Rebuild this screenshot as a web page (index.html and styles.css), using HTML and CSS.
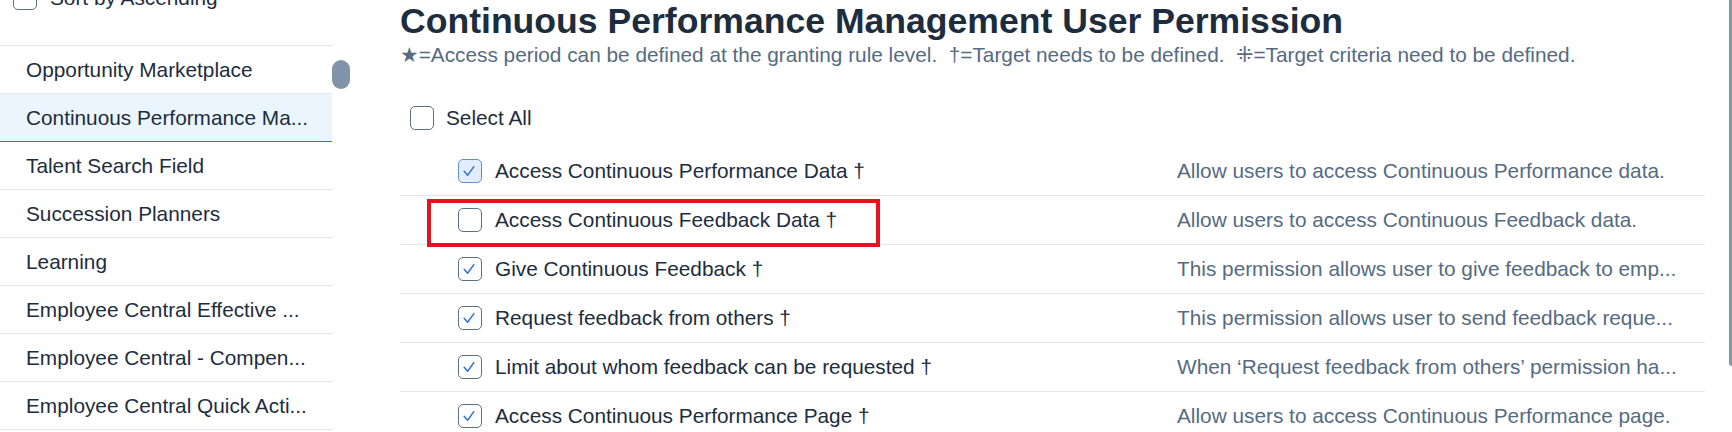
FILE: index.html
```html
<!DOCTYPE html>
<html lang="en">
<head>
<meta charset="utf-8">
<title>Continuous Performance Management User Permission</title>
<link rel="stylesheet" href="styles.css">
</head>
<body>
<aside class="side">
  <div class="side-panel">
    <label class="sort-row">
      <span class="cb"></span>
      <span class="sort-text">Sort by Ascending</span>
    </label>
    <ul class="cat-list">
      <li class="cat">Opportunity Marketplace</li>
      <li class="cat cat-selected">Continuous Performance Ma...</li>
      <li class="cat">Talent Search Field</li>
      <li class="cat">Succession Planners</li>
      <li class="cat">Learning</li>
      <li class="cat">Employee Central Effective ...</li>
      <li class="cat">Employee Central - Compen...</li>
      <li class="cat">Employee Central Quick Acti...</li>
    </ul>
  </div>
  <div class="side-track"><div class="side-thumb"></div></div>
</aside>

<main class="main">
  <h1 class="title">Continuous Performance Management User Permission</h1>
  <p class="legend">★=Access period can be defined at the granting rule level.&nbsp; †=Target needs to be defined.&nbsp; ⁜=Target criteria need to be defined.</p>

  <div class="select-all">
    <span class="cb"></span>
    <span class="select-text">Select All</span>
  </div>

  <div class="perm-list">
    <div class="perm">
      <div class="perm-name">
        <span class="cb cb-checked cb-focus"><svg viewBox="0 0 24 24"><polyline points="5.6,12.4 9.4,16.6 16.2,7.2"/></svg></span>
        <span class="perm-label">Access Continuous Performance Data †</span>
      </div>
      <div class="perm-desc">Allow users to access Continuous Performance data.</div>
    </div>
    <div class="perm perm-marked">
      <div class="perm-name">
        <span class="cb"></span>
        <span class="perm-label">Access Continuous Feedback Data †</span>
      </div>
      <div class="perm-desc">Allow users to access Continuous Feedback data.</div>
      <div class="mark-box"></div>
    </div>
    <div class="perm">
      <div class="perm-name">
        <span class="cb cb-checked"><svg viewBox="0 0 24 24"><polyline points="5.6,12.4 9.4,16.6 16.2,7.2"/></svg></span>
        <span class="perm-label">Give Continuous Feedback †</span>
      </div>
      <div class="perm-desc">This permission allows user to give feedback to emp...</div>
    </div>
    <div class="perm">
      <div class="perm-name">
        <span class="cb cb-checked"><svg viewBox="0 0 24 24"><polyline points="5.6,12.4 9.4,16.6 16.2,7.2"/></svg></span>
        <span class="perm-label">Request feedback from others †</span>
      </div>
      <div class="perm-desc">This permission allows user to send feedback reque...</div>
    </div>
    <div class="perm">
      <div class="perm-name">
        <span class="cb cb-checked"><svg viewBox="0 0 24 24"><polyline points="5.6,12.4 9.4,16.6 16.2,7.2"/></svg></span>
        <span class="perm-label">Limit about whom feedback can be requested †</span>
      </div>
      <div class="perm-desc">When ‘Request feedback from others’ permission ha...</div>
    </div>
    <div class="perm">
      <div class="perm-name">
        <span class="cb cb-checked"><svg viewBox="0 0 24 24"><polyline points="5.6,12.4 9.4,16.6 16.2,7.2"/></svg></span>
        <span class="perm-label">Access Continuous Performance Page †</span>
      </div>
      <div class="perm-desc">Allow users to access Continuous Performance page.</div>
    </div>
  </div>
</main>

<div class="page-track"><div class="page-thumb"></div></div>
</body>
</html>
```

FILE: styles.css
```css
html, body {
  margin: 0;
  padding: 0;
}

body {
  width: 1732px;
  height: 432px;
  overflow: hidden;
  display: flex;
  align-items: flex-start;
  background: #ffffff;
  color: #1d2d3e;
  font-family: "Liberation Sans", Arial, "DejaVu Sans", sans-serif;
  font-size: 20.8px;
}

/* ---------- left panel ---------- */
.side {
  width: 350px;
  flex: none;
  display: flex;
  align-items: flex-start;
}

.side-panel {
  width: 332px;
  flex: none;
}

.sort-row {
  display: flex;
  align-items: center;
  gap: 13px;
  height: 48px;
  margin-top: -26px;
  padding-left: 13px;
}

.cat-list {
  list-style: none;
  margin: 23px 0 0;
  padding: 0;
  border-top: 1px solid #e5e5e5;
}

.cat {
  height: 47px;
  line-height: 47px;
  padding-left: 26px;
  border-bottom: 1px solid #e5e5e5;
  white-space: nowrap;
  overflow: hidden;
}

.cat-selected {
  background: #ebf5fe;
  border-bottom-color: #3f6fc6;
}

.side-track {
  width: 18px;
  flex: none;
  padding-top: 60px;
}

.side-thumb {
  width: 18px;
  height: 29px;
  border-radius: 9px;
  background: #8193a8;
}

/* ---------- checkbox ---------- */
.cb {
  width: 24px;
  height: 24px;
  flex: none;
  box-sizing: border-box;
  border: 1px solid #5b6f85;
  border-radius: 5px;
  background: #ffffff;
  display: flex;
  align-items: center;
  justify-content: center;
}

.cb svg {
  width: 24px;
  height: 24px;
  fill: none;
  stroke: #2f6fd6;
  stroke-width: 1.6;
  stroke-linecap: round;
  stroke-linejoin: round;
}

.cb-focus {
  border-color: #5b8ee0;
  background: #e3eefc;
}

/* ---------- main ---------- */
.main {
  width: 1305px;
  flex: none;
  margin-left: 50px;
}

.title {
  margin: 0;
  padding-top: 1px;
  font-size: 35.6px;
  line-height: 40px;
  font-weight: 700;
  color: #1d2d3e;
  white-space: nowrap;
}

.legend {
  margin: 2px 0 0;
  font-size: 20.8px;
  line-height: 24px;
  color: #556b82;
  white-space: nowrap;
}

.select-all {
  display: flex;
  align-items: center;
  gap: 12px;
  height: 48px;
  margin-top: 27px;
  padding-left: 10px;
}

.perm-list {
  margin-top: 5px;
}

.perm {
  position: relative;
  display: flex;
  align-items: center;
  height: 48px;
  border-bottom: 1px solid #e5e5e5;
}

.perm-name {
  width: 777px;
  flex: none;
  box-sizing: border-box;
  padding-left: 58px;
  display: flex;
  align-items: center;
  gap: 13px;
  white-space: nowrap;
}

.perm-label {
  color: #1d2d3e;
}

.perm-desc {
  flex: 1;
  padding-right: 22px;
  color: #556b82;
  white-space: nowrap;
  overflow: hidden;
}

.mark-box {
  position: absolute;
  left: 27px;
  top: 3px;
  width: 453px;
  height: 48px;
  box-sizing: border-box;
  border: 4px solid #e3141f;
  pointer-events: none;
}

/* ---------- page scrollbar ---------- */
.page-track {
  margin-left: 24px;
  width: 3px;
  flex: none;
}

.page-thumb {
  width: 3px;
  height: 366px;
  background: #8696a9;
  border-bottom-left-radius: 3px;
}
```
